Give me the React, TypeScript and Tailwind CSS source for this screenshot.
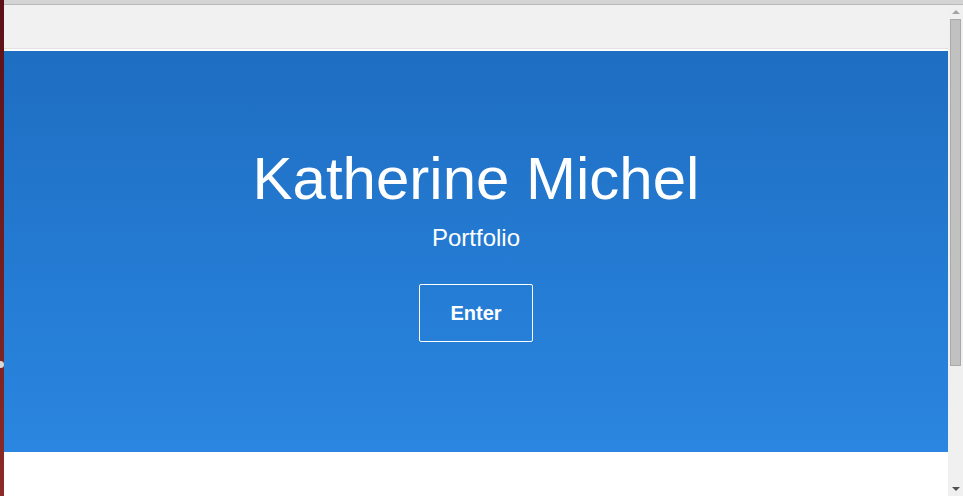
export default function App() {
  return (
    <div className="w-[963px] h-[496px] flex overflow-hidden bg-white font-['Liberation_Sans',Arial,sans-serif]">
      {/* left window edge */}
      <div className="relative w-[4px] h-full bg-gradient-to-b from-[#5c1018] to-[#8c2b27]">
        <div className="absolute left-0 top-[361px] w-[4px] h-[7px] bg-[#d8d8d8] rounded-r-sm" />
      </div>

      <div className="flex-1 flex flex-col">
        {/* top chrome */}
        <div className="h-[4px] bg-[#d4d4d4]" />
        <div className="h-[1px] bg-[#b9b9b9]" />

        <div className="flex-1 flex">
          {/* page */}
          <div className="flex-1 flex flex-col">
            <div className="h-[44px] bg-[#f1f1f1] border-b border-[#e2e2e2]" />
            <div className="h-[2px] bg-white" />
            <section className="h-[401px] flex flex-col items-center pt-[95px] bg-gradient-to-b from-[#1e6ec2] to-[#2a86e0] text-white">
              <h1 className="text-[60px] leading-[66px]">Katherine Michel</h1>
              <p className="mt-[10px] text-[24px] leading-[32px]">Portfolio</p>
              <button className="mt-[30px] border border-white rounded-[2px] px-[30px] py-[14px] text-[20px] leading-[28px] font-bold">
                Enter
              </button>
            </section>
            <div className="flex-1 bg-white" />
          </div>

          {/* scrollbar */}
          <div className="w-[15px] bg-[#f0f0f0] flex flex-col items-center">
            <div className="mt-[5px] w-0 h-0 border-l-[4px] border-r-[4px] border-b-[4px] border-l-transparent border-r-transparent border-b-[#a3a3a3]" />
            <div className="mt-[5px] w-[11px] h-[347px] bg-[#c1c1c1] border border-[#a9a9a9]" />
            <div className="flex-1" />
            <div className="mb-[5px] w-0 h-0 border-l-[4px] border-r-[4px] border-t-[4px] border-l-transparent border-r-transparent border-t-[#505050]" />
          </div>
        </div>
      </div>
    </div>
  );
}
